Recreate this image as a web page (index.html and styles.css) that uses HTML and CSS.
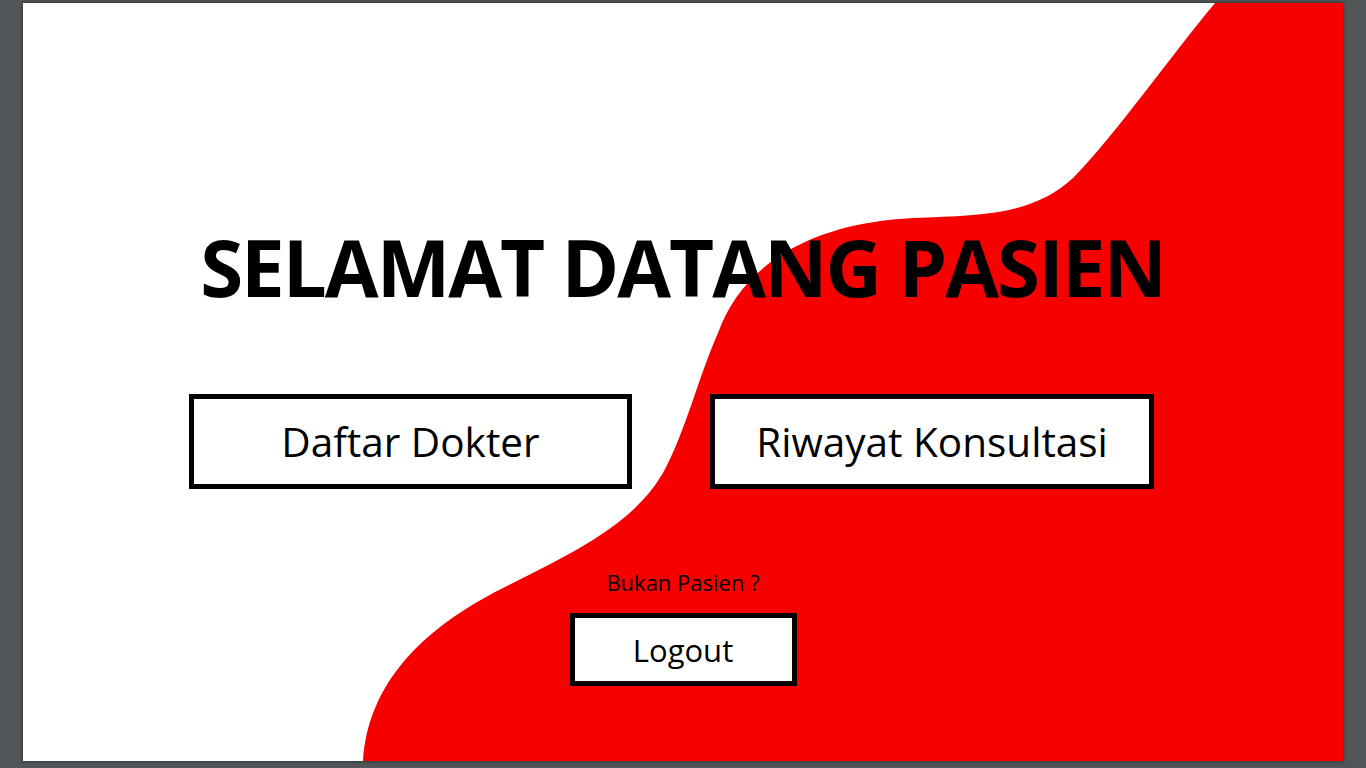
FILE: index.html
```html
<!DOCTYPE html>
<html lang="id">
<head>
<meta charset="utf-8">
<title>Selamat Datang Pasien</title>
<link rel="stylesheet" href="styles.css">
</head>
<body>
<div class="page">
  <svg class="wave" viewBox="0 0 1320 758" width="1320" height="758" aria-hidden="true">
    <path d="M1192,0 C1150,50 1090,135 1050,175 C1010,212 960,212 890,215 C790,220 720,260 695,330 C675,375 662,430 640,470 C610,520 560,545 480,585 C400,625 345,680 340,758 L1320,758 L1320,0 Z" fill="#f80000"/>
  </svg>
  <main class="content">
    <h1 class="title">SELAMAT DATANG PASIEN</h1>
    <div class="menu">
      <a class="btn btn-daftar" href="#">Daftar Dokter</a>
      <a class="btn btn-riwayat" href="#">Riwayat Konsultasi</a>
    </div>
    <p class="note">Bukan Pasien ?</p>
    <a class="btn btn-logout" href="#">Logout</a>
  </main>
</div>
</body>
</html>
```
FILE: styles.css
```css
html, body {
  margin: 0;
  padding: 0;
}
body {
  background: #525659;
  padding: 3px 23px;
  font-family: "Open Sans", "Noto Sans", sans-serif;
  color: #000;
  height: 768px;
  box-sizing: border-box;
  overflow: hidden;
}
.page {
  position: relative;
  width: 1320px;
  height: 758px;
  background: #fff;
  overflow: hidden;
  box-shadow: 0 0 4px rgba(0, 0, 0, 0.55);
}
.wave {
  position: absolute;
  left: 0;
  top: 0;
  display: block;
}
.content {
  position: relative;
  display: flex;
  flex-direction: column;
  align-items: center;
  padding-top: 225px;
}
.title {
  margin: 0;
  font-size: 78px;
  line-height: 78px;
  font-weight: 700;
  letter-spacing: -2px;
  white-space: nowrap;
  margin-left: -1px;
}
.menu {
  display: flex;
  gap: 78px;
  margin-top: 88px;
  align-self: flex-start;
  padding-left: 166px;
}
.btn {
  display: flex;
  align-items: center;
  justify-content: center;
  box-sizing: border-box;
  border: 5px solid #000;
  background: #fff;
  color: #000;
  text-decoration: none;
  font-weight: 400;
}
.btn-daftar {
  width: 443px;
  height: 95px;
  font-size: 40.5px;
}
.btn-riwayat {
  width: 444px;
  height: 95px;
  font-size: 40.5px;
}
.note {
  margin: 79px 0 0;
  font-size: 22px;
  line-height: 28px;
}
.btn-logout {
  margin-top: 17px;
  width: 227px;
  height: 73px;
  font-size: 31px;
}
```
